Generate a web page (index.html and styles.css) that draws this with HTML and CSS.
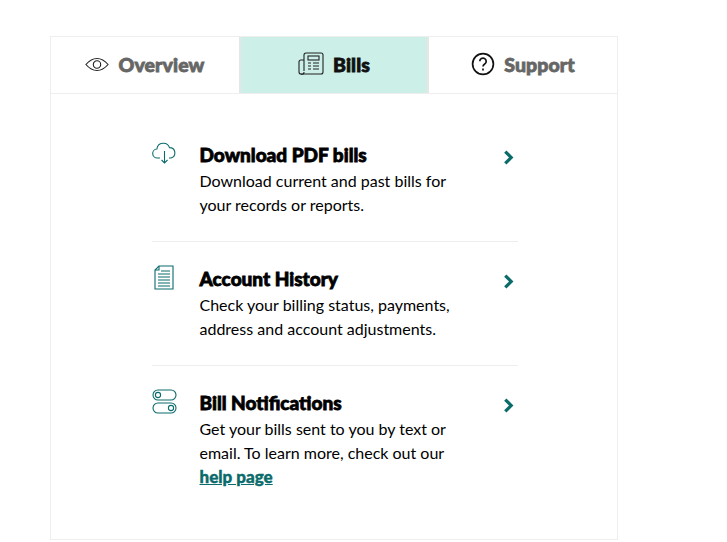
FILE: index.html
```html
<!DOCTYPE html>
<html lang="en">

<head>
  <meta charset="UTF-8">
  <meta name="viewport" content="width=device-width, initial-scale=1.0">
  <title>Bills</title>
  <link rel="stylesheet" href="styles.css">
</head>

<body>

  <div class="card">

    <!-- Tabs -->
    <div class="tabs">
      <a class="tab" href="#">
        <svg class="tab-icon" width="24" height="15" viewBox="0 0 26 16" fill="none" stroke="#222" stroke-width="1.2">
          <path d="M1 8C5 3.4 9 1.5 13 1.5S21 3.4 25 8C21 12.6 17 14.5 13 14.5S5 12.6 1 8Z" />
          <circle cx="13" cy="8" r="4" />
        </svg>
        Overview
      </a>
      <a class="tab active" href="#">
        <svg class="tab-icon" width="26" height="24" viewBox="0 0 26 24" fill="none" stroke="#222" stroke-width="1.1">
          <path d="M6 19V3a2 2 0 0 1 2-2h15a2 2 0 0 1 2 2v17a2 2 0 0 1-2 2H3a2 2 0 0 1-2-2V10a2 2 0 0 1 2-2h3" />
          <path d="M3 22a2 2 0 0 0 3-2" />
          <rect x="10" y="4" width="11" height="4" />
          <path d="M10 11h3M15 11h6M10 14h3M15 14h6M10 17h3M15 17h6" />
        </svg>
        Bills
      </a>
      <a class="tab" href="#">
        <svg class="tab-icon" width="24" height="24" viewBox="0 0 24 24" fill="none" stroke="#111" stroke-width="1.7">
          <circle cx="12" cy="12" r="10.4" />
          <path d="M8.8 9.3a3.2 3.2 0 1 1 4.9 2.7c-1.1.7-1.7 1.3-1.7 2.6" />
          <path d="M12 16.4v2" />
        </svg>
        Support
      </a>
    </div>

    <!-- Bill links -->
    <div class="list">

      <a class="item" href="#">
        <svg class="item-icon" width="25" height="24" viewBox="0 0 25 24" fill="none" stroke="#0b6b6b" stroke-width="1.1">
          <path d="M8 17H5.5a4.5 4.5 0 0 1-.6-9A6.5 6.5 0 0 1 17.5 6.6 5.3 5.3 0 0 1 19 17h-2" />
          <path d="M12.5 10v12M9.5 19l3 3 3-3" />
        </svg>
        <div class="item-body">
          <h3>Download PDF bills</h3>
          <p>Download current and past bills for your records or reports.</p>
        </div>
        <svg class="chevron" width="11" height="15" viewBox="0 0 10 14" fill="none" stroke="#0b6b6b" stroke-width="3">
          <path d="M2 1.5 7.5 7 2 12.5" />
        </svg>
      </a>

      <a class="item" href="#">
        <svg class="item-icon" width="25" height="25" viewBox="0 0 25 25" fill="none" stroke="#0b6b6b" stroke-width="1.1">
          <path d="M7 1h14v23H3V5Z" />
          <path d="M7 1v4H3" />
          <path d="M9 6h9M6 9h12M6 12h12M6 15h12M6 18h12M6 21h12" />
        </svg>
        <div class="item-body">
          <h3>Account History</h3>
          <p>Check your billing status, payments, address and account adjustments.</p>
        </div>
        <svg class="chevron" width="11" height="15" viewBox="0 0 10 14" fill="none" stroke="#0b6b6b" stroke-width="3">
          <path d="M2 1.5 7.5 7 2 12.5" />
        </svg>
      </a>

      <a class="item" href="#">
        <svg class="item-icon" width="25" height="25" viewBox="0 0 25 25" fill="none" stroke="#0b6b6b" stroke-width="1.1">
          <rect x="1" y="1" width="23" height="10" rx="5" />
          <circle cx="6" cy="6" r="2.6" />
          <rect x="1" y="14" width="23" height="10" rx="5" />
          <circle cx="19" cy="19" r="2.6" />
        </svg>
        <div class="item-body">
          <h3>Bill Notifications</h3>
          <p>Get your bills sent to you by text or email. To learn more, check out our <span class="help">help page</span></p>
        </div>
        <svg class="chevron" width="11" height="15" viewBox="0 0 10 14" fill="none" stroke="#0b6b6b" stroke-width="3">
          <path d="M2 1.5 7.5 7 2 12.5" />
        </svg>
      </a>

    </div>
  </div>

</body>

</html>
```

FILE: styles.css
```css
/* General Page Styles */
body {
  margin: 0;
  padding: 36px 109px 0 50px;
  background: #fff;
  color: #111;
  font-family: 'Lato', sans-serif;
}

/* Card */
.card {
  height: 502px;
  border: 1px solid #eee;
}

/* Tabs */
.tabs {
  display: grid;
  grid-template-columns: 188px 190px 1fr;
  height: 56px;
  border-bottom: 1px solid #eee;
}

.tab {
  display: flex;
  align-items: center;
  justify-content: center;
  gap: 9px;
  padding-bottom: 2px;
  font-size: 19.5px;
  font-weight: 900;
  letter-spacing: 0.1px;
  -webkit-text-stroke: 0.8px currentColor;
  color: #666;
  text-decoration: none;
}

.tab.active {
  background: #cceFe7;
  color: #111;
  border-left: 2px solid #e6e6e6;
  border-right: 2px solid #e6e6e6;
}

/* List */
.list {
  width: 366px;
  margin: 0 auto;
  padding-top: 47px;
  transform: translateX(1px);
}

.item {
  display: flex;
  align-items: flex-start;
  padding-bottom: 24px;
  margin-bottom: 23px;
  border-bottom: 1px solid #eee;
  color: inherit;
  text-decoration: none;
}

.item:last-child {
  border-bottom: none;
}

.item-icon {
  flex: none;
  margin-right: 22.5px;
}

.item-body {
  width: 265px;
}

h3 {
  margin: 0;
  font-size: 19px;
  line-height: 28px;
  font-weight: 900;
  -webkit-text-stroke: 0.8px currentColor;
  color: #000;
}

p {
  margin: 0;
  font-size: 16px;
  line-height: 24px;
  color: #000;
}

.help {
  display: block;
  font-size: 17px;
  font-weight: 900;
  -webkit-text-stroke: 0.4px currentColor;
  color: #0b6b6b;
  text-decoration: underline;
}

.chevron {
  flex: none;
  margin-left: auto;
  margin-top: 8.5px;
  margin-right: 4px;
}
```
